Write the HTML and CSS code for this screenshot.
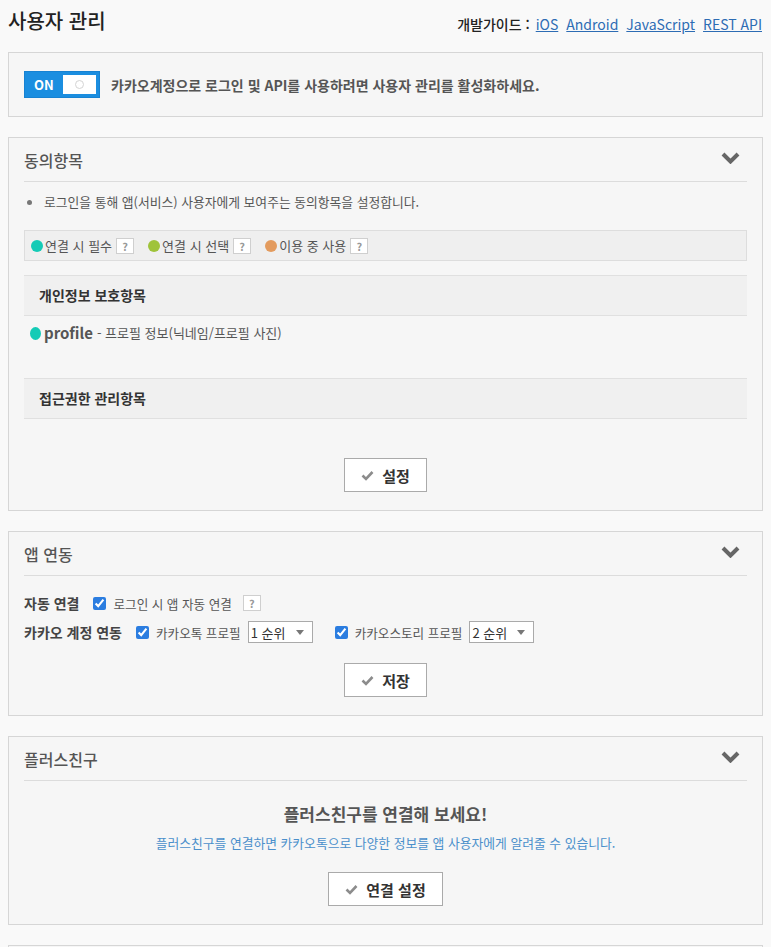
FILE: index.html
```html
<!DOCTYPE html>
<html lang="ko">
<head>
    <meta charset="UTF-8">
    <meta name="viewport" content="width=device-width, initial-scale=1.0">
    <title>사용자 관리</title>
    <link rel="stylesheet" href="styles.css">
</head>
<body>
    <div class="page-head">
        <h1 class="page-title">사용자 관리</h1>
        <div class="guide">
            <span class="guide-label">개발가이드 :</span>
            <a href="#">iOS</a>
            <a href="#">Android</a>
            <a href="#">JavaScript</a>
            <a href="#">REST API</a>
        </div>
    </div>

    <!-- 사용자 관리 활성화 -->
    <div class="box toggle-box">
        <div class="toggle">
            <span class="toggle-label">ON</span>
            <span class="toggle-knob"><i></i></span>
        </div>
        <p class="toggle-text">카카오계정으로 로그인 및 API를 사용하려면 사용자 관리를 활성화하세요.</p>
    </div>

    <!-- 동의항목 -->
    <div class="box section">
        <div class="section-head">
            <h2>동의항목</h2>
            <svg class="chevron" width="19" height="12" viewBox="0 0 19 12"><path d="M2 2l7.5 7.5L17 2" fill="none" stroke="#666" stroke-width="4"/></svg>
        </div>
        <ul class="notes">
            <li>로그인을 통해 앱(서비스) 사용자에게 보여주는 동의항목을 설정합니다.</li>
        </ul>
        <div class="legend">
            <span class="legend-item"><span class="dot dot-required"></span>연결 시 필수<span class="help">?</span></span>
            <span class="legend-item"><span class="dot dot-optional"></span>연결 시 선택<span class="help">?</span></span>
            <span class="legend-item"><span class="dot dot-used"></span>이용 중 사용<span class="help">?</span></span>
        </div>
        <div class="sub-head">개인정보 보호항목</div>
        <div class="scope"><span class="dot dot-required"></span><b>profile</b> - 프로필 정보(닉네임/프로필 사진)</div>
        <div class="sub-head sub-head-gap">접근권한 관리항목</div>
        <div class="actions">
            <button class="btn">
                <svg width="13" height="11" viewBox="0 0 13 11"><path d="M1.5 5.5l3.5 3.5 6.5-7" fill="none" stroke="#8c8c8c" stroke-width="2.6"/></svg>
                설정
            </button>
        </div>
    </div>

    <!-- 앱 연동 -->
    <div class="box section">
        <div class="section-head">
            <h2>앱 연동</h2>
            <svg class="chevron" width="19" height="12" viewBox="0 0 19 12"><path d="M2 2l7.5 7.5L17 2" fill="none" stroke="#666" stroke-width="4"/></svg>
        </div>
        <div class="form-row first-row">
            <span class="row-label">자동 연결</span>
            <label class="opt"><input type="checkbox" checked>로그인 시 앱 자동 연결</label>
            <span class="help">?</span>
        </div>
        <div class="form-row">
            <span class="row-label">카카오 계정 연동</span>
            <label class="opt"><input type="checkbox" checked>카카오톡 프로필</label>
            <span class="select-wrap">
                <select>
                    <option selected>1 순위</option>
                    <option>2 순위</option>
                </select>
            </span>
            <label class="opt opt-wide"><input type="checkbox" checked>카카오스토리 프로필</label>
            <span class="select-wrap">
                <select>
                    <option>1 순위</option>
                    <option selected>2 순위</option>
                </select>
            </span>
        </div>
        <div class="actions">
            <button class="btn">
                <svg width="13" height="11" viewBox="0 0 13 11"><path d="M1.5 5.5l3.5 3.5 6.5-7" fill="none" stroke="#8c8c8c" stroke-width="2.6"/></svg>
                저장
            </button>
        </div>
    </div>

    <!-- 플러스친구 -->
    <div class="box section">
        <div class="section-head">
            <h2>플러스친구</h2>
            <svg class="chevron" width="19" height="12" viewBox="0 0 19 12"><path d="M2 2l7.5 7.5L17 2" fill="none" stroke="#666" stroke-width="4"/></svg>
        </div>
        <p class="empty-title">플러스친구를 연결해 보세요!</p>
        <p class="empty-desc">플러스친구를 연결하면 카카오톡으로 다양한 정보를 앱 사용자에게 알려줄 수 있습니다.</p>
        <div class="actions">
            <button class="btn">
                <svg width="13" height="11" viewBox="0 0 13 11"><path d="M1.5 5.5l3.5 3.5 6.5-7" fill="none" stroke="#8c8c8c" stroke-width="2.6"/></svg>
                연결 설정
            </button>
        </div>
    </div>

    <div class="box section section-next"></div>
</body>
</html>
```

FILE: styles.css
```css
body {
    margin: 8px;
    font-family: "Noto Sans CJK KR", "Noto Sans", sans-serif;
    font-size: 13px;
    color: #555;
    background: #f9f9f9;
}
p, h1, h2, ul {
    margin: 0;
    padding: 0;
}
.page-head {
    display: flex;
    justify-content: space-between;
    align-items: center;
    height: 26px;
    margin-bottom: 18px;
}
.page-title {
    font-size: 20px;
    font-weight: 500;
    line-height: 26px;
    color: #222;
}
.guide {
    display: flex;
    align-items: center;
    gap: 8px;
    font-size: 14px;
    margin-top: 5px;
    margin-right: 1px;
}
.guide-label {
    color: #222;
    font-weight: 500;
    margin-right: -2px;
}
.guide a {
    color: #2d6cb4;
    text-decoration: underline;
}

.box {
    background: #f6f6f6;
    border: 1px solid #d6d6d6;
    margin-bottom: 20px;
}

/* ON/OFF toggle */
.toggle-box {
    display: flex;
    align-items: center;
    height: 63px;
    padding: 0 15px;
}
.toggle {
    display: flex;
    align-items: center;
    justify-content: space-between;
    box-sizing: border-box;
    width: 76px;
    height: 27px;
    padding: 0 3px 0 9px;
    background: #1b8ee0;
    border: 1px solid #1782d2;
}
.toggle-label {
    color: #fff;
    font-weight: bold;
    font-size: 13px;
}
.toggle-knob {
    display: flex;
    align-items: center;
    justify-content: center;
    width: 33px;
    height: 19px;
    background: #fff;
}
.toggle-knob i {
    width: 7px;
    height: 7px;
    border: 1px solid #d4d4d4;
    border-radius: 50%;
}
.toggle-text {
    margin-left: 11px;
    font-size: 14px;
    font-weight: bold;
    color: #555;
}

/* sections */
.section {
    padding: 0 15px 18px;
}
.section-head {
    display: flex;
    justify-content: space-between;
    align-items: center;
    padding: 12px 7px 11px 0;
    border-bottom: 1px solid #dcdcdc;
}
.section-head h2 {
    font-size: 16px;
    font-weight: 500;
    line-height: 20px;
    color: #555;
}
.chevron {
    margin-top: -5px;
}
.notes {
    list-style: none;
    padding-top: 11px;
    font-size: 12.8px;
}
.notes li {
    position: relative;
    padding-left: 20px;
    line-height: 18px;
}
.notes li::before {
    content: "";
    position: absolute;
    left: 3px;
    top: 7px;
    width: 5px;
    height: 5px;
    border-radius: 50%;
    background: #777;
}

.legend {
    display: flex;
    align-items: center;
    gap: 14px;
    margin-top: 19px;
    height: 29px;
    padding: 0 6px;
    background: #efefef;
    border: 1px solid #dddddd;
}
.legend-item {
    display: flex;
    align-items: center;
}
.dot {
    display: inline-block;
    width: 12px;
    height: 12px;
    border-radius: 50%;
    margin-right: 2px;
}
.dot-required { background: #14cbb6; }
.dot-optional { background: #9fc33a; }
.dot-used { background: #e39b5e; }
.help {
    display: inline-flex;
    align-items: center;
    justify-content: center;
    box-sizing: border-box;
    width: 18px;
    height: 16px;
    margin-left: 4px;
    background: #fff;
    border: 1px solid #cfcfcf;
    color: #999;
    font-size: 11px;
    font-weight: bold;
}

.sub-head {
    margin-top: 14px;
    height: 39px;
    line-height: 39px;
    padding-left: 15px;
    background: #f0f0f0;
    border-top: 1px solid #e0e0e0;
    border-bottom: 1px solid #e0e0e0;
    font-size: 14px;
    font-weight: bold;
    color: #333;
}
.sub-head-gap {
    margin-top: 35px;
}
.scope {
    display: flex;
    align-items: center;
    padding: 7px 0 0 6px;
    line-height: 20px;
}
.scope .dot {
    width: 11px;
    height: 13px;
    margin-right: 3px;
}
.scope b {
    font-size: 15px;
    color: #555;
    margin-right: 4px;
}

.actions {
    display: flex;
    justify-content: center;
    padding-top: 39px;
}
.btn {
    display: flex;
    align-items: center;
    gap: 8px;
    height: 34px;
    padding: 0 16px;
    background: #fff;
    border: 1px solid #aaa;
    font-family: inherit;
    font-size: 15px;
    font-weight: bold;
    color: #333;
    cursor: pointer;
}

/* 앱 연동 */
.form-row {
    display: flex;
    align-items: center;
    gap: 7px;
    height: 22px;
    margin-top: 7px;
}
.first-row {
    margin-top: 16px;
}
.row-label {
    font-size: 14px;
    font-weight: bold;
    color: #444;
    margin-right: 7px;
}
.opt {
    display: flex;
    align-items: center;
    gap: 7px;
    font-size: 12.6px;
}
.opt input {
    width: 13px;
    height: 13px;
    margin: 0;
    accent-color: #2b7de0;
}
.opt-wide {
    margin-left: 15px;
}
.select-wrap {
    position: relative;
}
.select-wrap select {
    appearance: none;
    width: 65px;
    height: 22px;
    padding: 0 0 0 2px;
    border: 1px solid #aaa;
    border-radius: 0;
    background: #fff;
    font-family: inherit;
    font-size: 13px;
    color: #333;
}
.select-wrap::after {
    content: "";
    position: absolute;
    right: 9px;
    top: 9px;
    border-left: 4px solid transparent;
    border-right: 4px solid transparent;
    border-top: 5px solid #777;
}
.section .form-row + .actions {
    padding-top: 20px;
}

/* 플러스친구 */
.empty-title {
    padding-top: 21px;
    text-align: center;
    font-size: 17px;
    font-weight: bold;
    line-height: 24px;
    color: #555;
}
.empty-desc {
    margin-top: 8px;
    text-align: center;
    line-height: 18px;
    font-size: 12.8px;
    color: #4a8fcb;
}
.empty-desc + .actions {
    padding-top: 20px;
}

.section-next {
    height: 60px;
}
```
